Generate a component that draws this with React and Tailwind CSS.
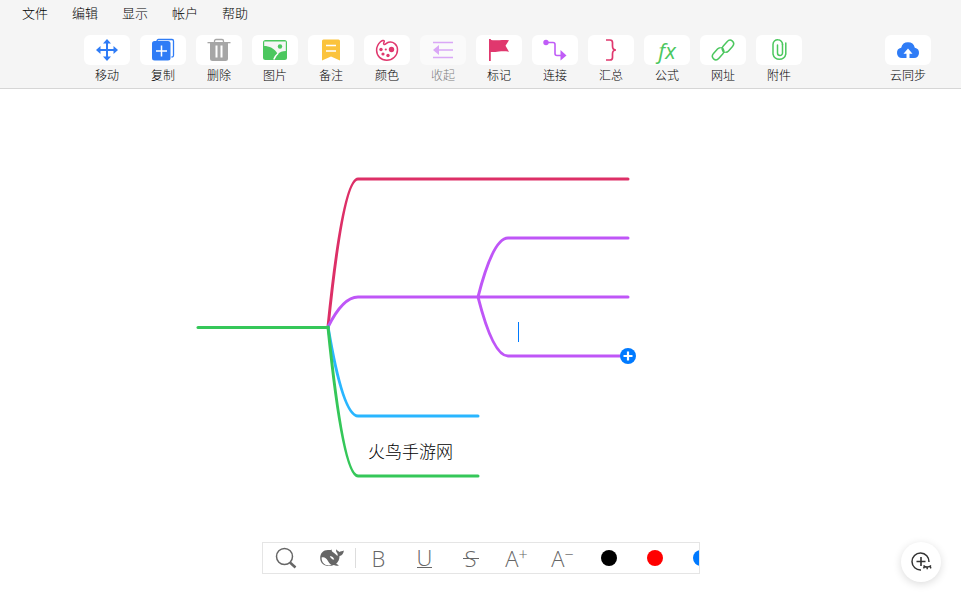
import React, { useState } from "react";

const menus = ["文件", "编辑", "显示", "帐户", "帮助"];

const MoveIcon = () => (
  <svg width="24" height="24" viewBox="0 0 24 24" fill="#2f7cf6" aria-hidden="true">
    <path d="M11 4h2v16h-2zM4 11h16v2H4z" />
    <path d="M12 1l4 4.500H8zM12 23l-4-4.500h8zM1 12l4.500-4v8zM23 12l-4.500 4V8z" />
  </svg>
);

const CopyIcon = () => (
  <svg width="24" height="24" viewBox="0 0 24 24" fill="none" aria-hidden="true">
    <path d="M6 3.500V3a1.500 1.500 0 0 1 1.500-1.500H21A1.500 1.500 0 0 1 22.500 3v14.500A1.500 1.500 0 0 1 21 19h-.5" stroke="#2f7cf6" strokeWidth="1.300" />
    <rect x="1" y="3" width="18.500" height="19.500" rx="2.500" fill="#2f7cf6" />
    <path d="M10.500 7.500v11M5 13h11" stroke="#fff" strokeWidth="1.500" />
  </svg>
);

const TrashIcon = () => (
  <svg width="24" height="24" viewBox="0 0 24 24" fill="none" aria-hidden="true">
    <path d="M7.500 4V3a1.500 1.500 0 0 1 1.500-1.500h6A1.500 1.500 0 0 1 16.500 3v1" stroke="#a6a6a6" strokeWidth="1.300" />
    <path d="M.5 4h23v1.300H.5z" fill="#a6a6a6" />
    <path d="M3 5h18v15.500a2.500 2.500 0 0 1-2.500 2.500h-13A2.500 2.500 0 0 1 3 20.500z" fill="#a6a6a6" />
    <path d="M9.500 7.500v12M14.500 7.500v12" stroke="#fff" strokeWidth="2" />
  </svg>
);

const PictureIcon = () => (
  <svg width="26" height="24" viewBox="0 0 26 24" fill="none" aria-hidden="true">
    <rect x="1" y="2" width="24" height="20" rx="2.500" fill="#4bc75e" />
    <path d="M2.200 3.500h21.600v9.500c-3.500 0-6 1-8 3.200C12.500 10 7 8 2.200 8z" fill="#f5f5f5" />
    <path d="M16 15.500c-2 1.600-3.300 3.500-4.200 6" stroke="#fff" strokeWidth="1.500" />
    <circle cx="18" cy="8.500" r="2.200" fill="#4bc75e" />
  </svg>
);

const NoteIcon = () => (
  <svg width="24" height="24" viewBox="0 0 24 24" aria-hidden="true">
    <path d="M3 3a1.500 1.500 0 0 1 1.500-1.500h15A1.500 1.500 0 0 1 21 3v19.500l-9-4-9 4z" fill="#fbc33c" />
    <path d="M7 7.500h10M7 13h10" stroke="#fff" strokeWidth="1.600" />
  </svg>
);

const PaletteIcon = () => (
  <svg width="24" height="24" viewBox="0 0 24 24" fill="none" aria-hidden="true">
    <path d="M5.500 3.800C7 2.400 8.700 2 9.200 2.900c.6 1.100-1.500 2.400-.3 3.400 1.300.9 2.300-1.300 4.600-2 4.500-1.300 9 2.200 9 7.400 0 6-5 10.500-10.800 10.500C6 22.200 1.600 18 1.600 12.200c0-3.400 1.500-6.200 3.900-8.400z" stroke="#e0386e" strokeWidth="1.500" strokeLinejoin="round" />
    <circle cx="16.500" cy="11.500" r="2.700" fill="#e0386e" />
    <g fill="#e0386e">
      <circle cx="6" cy="11.500" r="1.700" />
      <circle cx="8" cy="16" r="1.600" />
      <circle cx="13" cy="17.500" r="1.700" />
      <circle cx="10.800" cy="11.500" r="1.100" />
    </g>
  </svg>
);

const CollapseIcon = () => (
  <svg width="24" height="24" viewBox="0 0 24 24" aria-hidden="true">
    <path d="M2 4.500h20M2 19.500h20M8 12h14" stroke="#c05cf7" strokeWidth="1.500" />
    <path d="M2 12l6-5v10z" fill="#c05cf7" />
  </svg>
);

const FlagIcon = () => (
  <svg width="24" height="24" viewBox="0 0 24 24" fill="#e0386e" aria-hidden="true">
    <path d="M2 1h1.800v22H2z" />
    <path d="M3 1.500c3 1 5 1 9.500.7 4-.3 6-.2 9.500 0l-3.500 5.500 3.500 6c-4-.6-7-.6-10-.1-3.500.6-6 .5-9 .5z" />
  </svg>
);

const ConnectIcon = () => (
  <svg width="26" height="24" viewBox="0 0 26 24" fill="none" aria-hidden="true">
    <circle cx="4" cy="4.500" r="2.700" fill="#c05cf7" />
    <path d="M4 4.500h7a2 2 0 0 1 2 2V15.500a2 2 0 0 0 2 2h5" stroke="#c05cf7" strokeWidth="1.600" />
    <path d="M18.500 12l6 5.500-6 5z" fill="#c05cf7" />
  </svg>
);

const SummaryIcon = () => (
  <svg width="24" height="24" viewBox="0 0 24 24" fill="none" aria-hidden="true">
    <path d="M7 2h4a2.500 2.500 0 0 1 2.500 2.500V8c0 2.500 1 4 3.500 4-2.500 0-3.500 1.500-3.500 4v3.500A2.500 2.500 0 0 1 11 22H7" stroke="#e0386e" strokeWidth="1.700" />
  </svg>
);

const LinkIcon = () => (
  <svg width="24" height="24" viewBox="0 0 24 24" fill="none" stroke="#4bc75e" strokeWidth="1.500" strokeLinecap="round" aria-hidden="true">
    <path d="M13.200 14.300c-2.300-1.400-2.700-4.300-.9-6.300l3.800-4.300c1.600-1.800 3.800-1.900 5.300-.6 1.500 1.400 1.600 3.600.1 5.300l-4 4.500c-.8.900-1.700 1.300-2.700 1.300" />
    <path d="M10.800 9.700c2.300 1.400 2.700 4.300.9 6.300l-3.800 4.300c-1.600 1.800-3.800 1.900-5.300.6-1.500-1.400-1.600-3.600-.1-5.300l4-4.500c.8-.9 1.700-1.300 2.700-1.300" />
  </svg>
);

const ClipIcon = () => (
  <svg width="24" height="24" viewBox="0 0 24 24" fill="none" stroke="#4bc75e" strokeWidth="1.500" strokeLinecap="round" aria-hidden="true">
    <path d="M15.500 6v9a2.500 2.500 0 0 1-5 0V7" />
    <path d="M15.500 6.500A4.500 4.500 0 0 0 11 1.800 4.700 4.700 0 0 0 6 6.500V16a6.500 6.500 0 0 0 12.800 0V5" />
  </svg>
);

const CloudIcon = () => (
  <svg width="24" height="24" viewBox="0 0 24 24" aria-hidden="true">
    <path d="M6 20a5.200 5.200 0 0 1-.8-10.300 7 7 0 0 1 13.600 0A5.200 5.200 0 0 1 18 20z" fill="#2f7cf6" />
    <path d="M12 10.500l4.500 5.300h-3V20h-3v-4.200h-3z" fill="#fff" />
  </svg>
);

const FormulaIcon = () => (
  <span className="font-['Open_Sans',sans-serif] text-[22px] leading-6 font-normal text-[#4bc75e] italic">
    fx
  </span>
);

const tools = [
  { label: "移动", icon: <MoveIcon /> },
  { label: "复制", icon: <CopyIcon /> },
  { label: "删除", icon: <TrashIcon /> },
  { label: "图片", icon: <PictureIcon /> },
  { label: "备注", icon: <NoteIcon /> },
  { label: "颜色", icon: <PaletteIcon /> },
  { label: "收起", icon: <CollapseIcon />, disabled: true },
  { label: "标记", icon: <FlagIcon /> },
  { label: "连接", icon: <ConnectIcon /> },
  { label: "汇总", icon: <SummaryIcon /> },
  { label: "公式", icon: <FormulaIcon /> },
  { label: "网址", icon: <LinkIcon /> },
  { label: "附件", icon: <ClipIcon /> },
];

// branch lines, drawn in order so the root line ends up on top
const branches = [
  { d: "M328 238Q343 90 358 90H628", color: "#dd2f67" },
  { d: "M328 238Q343 208 358 208H628", color: "#bf56f7" },
  { d: "M478 208Q493 149 508 149H628", color: "#bf56f7" },
  { d: "M478 208Q493 267 508 267H628", color: "#bf56f7" },
  { d: "M328 238Q343 327 358 327H478", color: "#29b6ff" },
  { d: "M328 238Q343 387 358 387H478", color: "#35c759" },
  { d: "M198 238.500H328", color: "#35c759" },
];

const colors = [
  { name: "黑色", className: "bg-black" },
  { name: "红色", className: "bg-[#ff0000]" },
  { name: "蓝色", className: "bg-[#007aff]" },
];

const ToolButton = ({ label, icon, disabled }) => (
  <button
    type="button"
    disabled={disabled}
    className={`flex w-[46px] flex-col items-center ${disabled ? "opacity-50" : ""}`}
  >
    <span className="flex h-[30px] w-full items-center justify-center rounded-md bg-white">
      {icon}
    </span>
    <span className="text-xs leading-5 whitespace-nowrap text-black">{label}</span>
  </button>
);

const FormatButton = ({ label, children }) => (
  <button
    type="button"
    aria-label={label}
    className="flex h-full w-[46px] shrink-0 items-center justify-center text-[#666]"
  >
    {children}
  </button>
);

const App = () => {
  const [draft, setDraft] = useState("");

  return (
    <div className="flex min-h-screen flex-col bg-white font-['Noto_Sans_CJK_SC',sans-serif] font-light">
      {/* HEADER */}
      <header className="border-b border-[#d6d6d6] bg-[#f5f5f5]">
        <nav className="flex h-[26px] gap-6 px-[22px]">
          {menus.map((menu) => (
            <button key={menu} type="button" className="text-[13px] text-black">
              {menu}
            </button>
          ))}
        </nav>

        <div className="flex justify-between pt-[9px] pr-[30px] pb-[3px] pl-[84px]">
          <div className="flex gap-[10px]">
            {tools.map((tool) => (
              <ToolButton key={tool.label} {...tool} />
            ))}
          </div>
          <ToolButton label="云同步" icon={<CloudIcon />} />
        </div>
      </header>

      {/* MIND MAP */}
      <main className="relative flex flex-1 flex-col overflow-hidden">
        <svg width="640" height="400" className="absolute top-0 left-0" aria-hidden="true">
          {branches.map((branch) => (
            <path
              key={branch.d}
              d={branch.d}
              fill="none"
              stroke={branch.color}
              strokeWidth="3"
              strokeLinecap="round"
              strokeLinejoin="round"
            />
          ))}
        </svg>

        <span className="absolute top-[349px] left-[368px] text-[17px] leading-[26px] text-black">
          火鸟手游网
        </span>

        <input
          aria-label="节点内容"
          value={draft}
          onChange={(e) => setDraft(e.target.value)}
          className="absolute top-[233px] left-[518px] h-5 w-[100px] border-l border-[#007aff] text-[17px] outline-none"
        />

        <button
          type="button"
          aria-label="添加节点"
          className="absolute top-[259px] left-[620px] flex size-4 items-center justify-center rounded-full bg-[#007aff]"
        >
          <svg width="10" height="10" viewBox="0 0 10 10" aria-hidden="true">
            <path d="M5 .5v9M.5 5h9" stroke="#fff" strokeWidth="2.200" />
          </svg>
        </button>

        {/* FORMAT BAR */}
        <div className="mt-auto mb-7 flex h-8 w-[438px] self-center overflow-hidden border border-[#e5e5e5] bg-white font-['Open_Sans',sans-serif]">
          <FormatButton label="搜索">
            <svg width="22" height="22" viewBox="0 0 22 22" fill="none" stroke="currentColor" aria-hidden="true">
              <circle cx="9.500" cy="9.500" r="8" strokeWidth="1.500" />
              <path d="M15 15.500l5.500 5" strokeWidth="2.500" />
            </svg>
          </FormatButton>
          <FormatButton label="智能助手">
            <svg width="24" height="20" viewBox="0 0 24 20" aria-hidden="true">
              <path d="M.2 10C.2 4.800 3.600 1.700 8.500 2c1.500.2 2.500 0 3.300-.6-.3 1.300.3 2.100 1.300 2.900 2 1.300 3.200 2.600 4.200 3.700.7-1 .4-2.200-.4-3.200-.8-.9-1-2.200-.6-3.600.7 1.400 1.900 1.700 3.100 2.800 1.200-1.200 2.800-.6 4.500-1.600-.3 3.100-1.900 5-4.400 5.600.2 3.300-1.400 5.900-3.300 7.700.8.700 2 .9 2.700 1.700-1.700.7-3.600.5-5-.3C8 19.600.2 17.500.2 10z" fill="currentColor" />
              <path d="M1.600 9.500c2.500-1 4.700.5 6.200 3.200 1 1.800 2.200 3.300 3.800 4.300C6.500 18.800 1.300 15.500 1.600 9.500z" fill="#fff" />
              <path d="M9.800 8.500c1.800-.7 4 .9 4.400 3.400-.9-.6-1.400-.7-2-.4-.3-1.100-1.400-1.400-2.400-3z" fill="#fff" />
            </svg>
          </FormatButton>
          <span className="my-auto h-5 w-px shrink-0 bg-[#ddd]" />
          <FormatButton label="加粗">
            <span className="text-[22px] leading-none">B</span>
          </FormatButton>
          <FormatButton label="下划线">
            <span className="border-b border-current text-[22px] leading-[19px]">U</span>
          </FormatButton>
          <FormatButton label="删除线">
            <span className="relative text-[22px] leading-none">
              S
              <span className="absolute -inset-x-0.5 top-1/2 h-px bg-current" />
            </span>
          </FormatButton>
          <FormatButton label="增大字号">
            <span className="text-[22px] leading-none">A</span>
            <span className="mb-2 text-base leading-none">+</span>
          </FormatButton>
          <FormatButton label="减小字号">
            <span className="text-[22px] leading-none">A</span>
            <span className="mb-2 text-base leading-none">−</span>
          </FormatButton>
          {colors.map((color) => (
            <FormatButton key={color.name} label={color.name}>
              <span className={`size-4 rounded-full ${color.className}`} />
            </FormatButton>
          ))}
        </div>

        <button
          type="button"
          aria-label="缩放"
          className="absolute right-5 bottom-5 flex size-10 items-center justify-center rounded-full bg-white shadow-[0_2px_8px_rgba(0,0,0,0.14)]"
        >
          <svg width="22" height="22" viewBox="0 0 22 22" fill="none" stroke="#333" strokeWidth="1.500" aria-hidden="true">
            <path d="M11 19A8.500 8.500 0 1 1 19 11" />
            <path d="M11 6v9M6.500 10.500h9" strokeWidth="1.600" />
            <path d="M13.500 14.500c2 2 5.500 2 7.500 0M14.500 15.500l-1 1.800M17.200 16v2.300M20 15.500l1 1.800" />
          </svg>
        </button>
      </main>
    </div>
  );
};

export default App;
